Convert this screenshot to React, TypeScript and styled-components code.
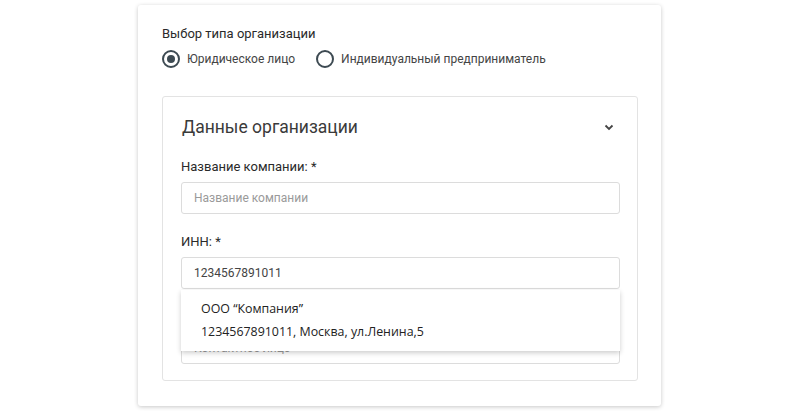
import styled, { createGlobalStyle } from "styled-components";

const GlobalStyle = createGlobalStyle`
  body {
    margin: 0;
    background: #fff;
    font-family: Roboto, "Liberation Sans", sans-serif;
  }
`;

const Page = styled.div`
  display: flex;
  justify-content: center;
  padding-top: 5px;
  height: 415px;
  box-sizing: border-box;
  overflow: hidden;
`;

const Card = styled.div`
  width: 523px;
  height: 401px;
  box-sizing: border-box;
  margin-left: -1px;
  padding: 21px 23px 25px 24px;
  background: #fff;
  border-radius: 3px;
  box-shadow: 0 1px 4px rgba(0, 0, 0, 0.22);
  display: flex;
  flex-direction: column;
`;

const Title = styled.div`
  font-size: 13px;
  color: #2a2a2a;
  line-height: 15px;
`;

const RadioRow = styled.div`
  display: flex;
  gap: 21px;
  margin-top: 9px;
`;

const RadioOption = styled.label`
  display: flex;
  align-items: center;
  gap: 7px;
  font-size: 12px;
  color: #444;
`;

const RadioCircle = styled.span<{ $checked?: boolean }>`
  width: 18px;
  height: 18px;
  box-sizing: border-box;
  border: 2px solid #3d4a52;
  border-radius: 50%;
  display: flex;
  align-items: center;
  justify-content: center;
  &::after {
    content: "";
    width: 8px;
    height: 8px;
    border-radius: 50%;
    background: #3d4a52;
    display: ${(p) => (p.$checked ? "block" : "none")};
  }
`;

const Panel = styled.div`
  margin-top: 28px;
  border: 1px solid #e3e3e3;
  border-radius: 3px;
  padding: 18px 17px 13px 18px;
  display: flex;
  flex-direction: column;
  flex: 1;
`;

const PanelHeader = styled.div`
  display: flex;
  justify-content: space-between;
  align-items: center;
  padding-left: 1px;
  padding-right: 6px;
`;

const PanelTitle = styled.div`
  font-size: 17.5px;
  color: #3a3a3a;
  line-height: 24px;
`;

const Field = styled.div`
  display: flex;
  flex-direction: column;
  position: relative;
`;

const Label = styled.div`
  font-size: 13px;
  color: #2a2a2a;
  line-height: 15px;
  margin-top: 20px;
  margin-bottom: 8px;
`;

const Input = styled.input`
  height: 32px;
  box-sizing: border-box;
  border: 1px solid #dcdcdc;
  border-radius: 3px;
  padding: 0 12px;
  font-family: Roboto, "Liberation Sans", sans-serif;
  font-size: 12px;
  color: #444;
  outline: none;
  &::placeholder {
    color: #9a9a9a;
  }
`;

const Suggestions = styled.ul`
  position: absolute;
  top: 100%;
  left: 0;
  right: 0;
  margin: 1px 0 0;
  padding: 7px 0 8px;
  list-style: none;
  background: #fff;
  box-shadow: 0 2px 5px rgba(0, 0, 0, 0.2);
  z-index: 2;
`;

const Suggestion = styled.li`
  font-family: "Open Sans", "Liberation Sans", sans-serif;
  font-size: 12.4px;
  color: #222;
  line-height: 23px;
  padding: 0 20px;
`;

function Chevron() {
  return (
    <svg width="10" height="7" viewBox="0 0 10 7" fill="none">
      <path d="M1.5 1.5 5 5 8.5 1.5" stroke="#444" strokeWidth="1.8" />
    </svg>
  );
}

export default function App() {
  return (
    <>
      <GlobalStyle />
      <Page>
        <Card>
          <Title>Выбор типа организации</Title>
          <RadioRow>
            <RadioOption>
              <RadioCircle $checked />
              Юридическое лицо
            </RadioOption>
            <RadioOption>
              <RadioCircle />
              Индивидуальный предприниматель
            </RadioOption>
          </RadioRow>
          <Panel>
            <PanelHeader>
              <PanelTitle>Данные организации</PanelTitle>
              <Chevron />
            </PanelHeader>
            <Field>
              <Label>Название компании: *</Label>
              <Input placeholder="Название компании" />
            </Field>
            <Field>
              <Label>ИНН: *</Label>
              <Input defaultValue="1234567891011" />
              <Suggestions>
                <Suggestion>ООО “Компания”</Suggestion>
                <Suggestion>1234567891011, Москва, ул.Ленина,5</Suggestion>
              </Suggestions>
            </Field>
            <Field>
              <Label>Контактное лицо: *</Label>
              <Input placeholder="Контактное лицо" />
            </Field>
          </Panel>
        </Card>
      </Page>
    </>
  );
}
